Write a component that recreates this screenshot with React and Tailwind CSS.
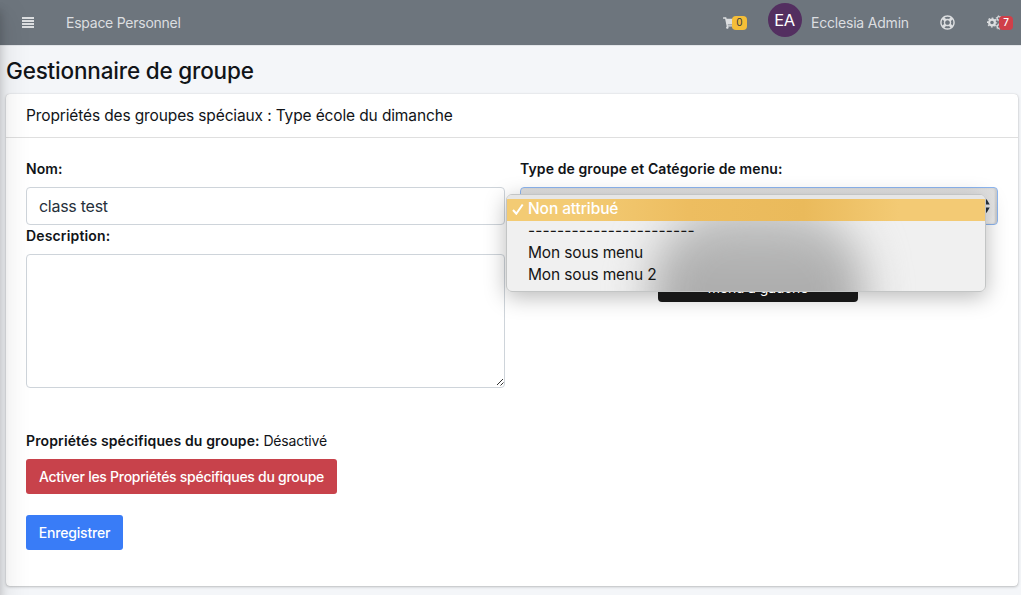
import { FaShoppingCart, FaRegLifeRing } from 'react-icons/fa';

function Cogs() {
  return (
    <svg viewBox="0 0 16 15" className="h-[15px] w-[16px] shrink-0" fill="none" stroke="currentColor">
      <circle cx="5" cy="7.5" r="2.9" strokeWidth="2.2" />
      <circle cx="5" cy="7.5" r="4.4" strokeWidth="1.4" strokeDasharray="1.7 1.755" strokeDashoffset="0.85" />
      <circle cx="11.8" cy="3.4" r="1.7" strokeWidth="1.3" />
      <circle cx="11.8" cy="3.4" r="2.6" strokeWidth="0.9" strokeDasharray="1.3 1.42" />
      <circle cx="11.8" cy="11.6" r="1.7" strokeWidth="1.3" />
      <circle cx="11.8" cy="11.6" r="2.6" strokeWidth="0.9" strokeDasharray="1.3 1.42" />
    </svg>
  );
}

function Header() {
  return (
    <header className="flex h-[46px] items-center border-b border-[#e3e6ea] bg-[#6d757d] text-[14px] text-[#dcdee0]">
      <svg viewBox="0 0 12 12" className="ml-[22px] h-3 w-3 shrink-0" fill="currentColor">
        <path d="M0 0h12v2H0zM0 3h12v2H0zM0 6h12v2H0zM0 9h12v2H0z" />
      </svg>
      <span className="ml-[32px] w-[115px] whitespace-nowrap tracking-[-0.25px]">Espace Personnel</span>
      <div className="ml-auto flex h-full items-center">
        <div className="flex w-[25px] items-center">
          <FaShoppingCart className="ml-[0.5px] h-3 w-[13px] shrink-0" />
          <span className="z-10 -ml-[3.5px] flex h-[14px] w-[15px] shrink-0 items-center justify-center rounded-[4px] bg-[#f5be38] text-[10px] text-[#343a40]">0</span>
        </div>
        <div className="mb-[5px] ml-[20.5px] flex h-[34px] w-[34px] items-center justify-center rounded-full bg-[#532f60] text-[16.5px] tracking-[-0.3px] text-white">EA</div>
        <span className="ml-[9.5px] w-[98px] whitespace-nowrap tracking-[-0.2px]">Ecclesia Admin</span>
        <FaRegLifeRing className="ml-[31px] h-[15px] w-[15px]" />
        <div className="ml-[32px] mr-[7px] flex w-[27px] items-center">
          <Cogs />
          <span className="z-10 -ml-[4px] flex h-[14px] w-[14px] shrink-0 items-center justify-center rounded-[4px] bg-[#cf3f49] text-[10px] font-medium text-white">7</span>
        </div>
      </div>
    </header>
  );
}

function GroupMenu() {
  return (
    <div className="absolute -left-[15px] top-[6px] z-20 h-[98px] w-[480px] overflow-hidden rounded-[6px] border border-[#c3c5c5] bg-[#f0f0f0] pt-1 text-[15.5px] text-[#151515]">
      <div className="absolute left-[145px] top-[10px] h-[200px] w-[212px] rounded-[80px] bg-[linear-gradient(#c4c5c5,#acacac_40%)] blur-[22px]" />
      <div className="absolute left-0 top-0 h-1 w-full bg-[#e6e6e6]" />
      <div className="relative flex h-[22px] items-center bg-[linear-gradient(90deg,#f3cb74_15%,#edbd60_38%,#eaba5b_62%,#f3ca74_82%)] pl-[5px] text-white">
        <svg viewBox="0 0 12 12" className="mb-[2px] mr-[4px] h-3 w-3"><path d="M1 7l3.3 3.7L10.7 1.5" fill="none" stroke="currentColor" strokeWidth="2" /></svg>
        <span className="pb-[2px] font-medium tracking-[-0.1px]">Non attribué</span>
      </div>
      <div className="relative h-[22px] whitespace-nowrap pl-[21px] leading-[20px] tracking-[0.12px]">-----------------------</div>
      <div className="relative h-[22px] pl-[21px] leading-[20px] tracking-[-0.15px]">Mon sous menu</div>
      <div className="relative h-[22px] pl-[21px] leading-[20px] tracking-[-0.15px]">Mon sous menu 2</div>
    </div>
  );
}

export default function App() {
  return (
    <div className="relative h-[595px] w-[1021px] overflow-hidden bg-[#f4f6f9] font-['Inter',sans-serif] text-[#111418]">
      <Header />
      <h1 className="ml-[6px] mt-[10px] h-[38px] whitespace-nowrap text-[22.5px] font-medium leading-[30px] tracking-[-0.18px]">Gestionnaire de groupe</h1>
      <main className="ml-[6px] h-[492px] w-[1012px] rounded-[4px] bg-white shadow-[0_0_1px_rgba(0,0,0,.2),0_1px_3px_rgba(0,0,0,.22)]">
        <h2 className="h-[44px] border-b border-[#dfdfdf] pl-5 text-[15.5px] leading-[43px] tracking-[-0.13px]">Propriétés des groupes spéciaux : Type école du dimanche</h2>
        <div className="px-5 pt-[21px] text-[14px]">
          <div className="flex gap-[15px]">
            <section className="w-[479px]">
              <label className="block h-[28px] font-semibold leading-[19px] tracking-[0.1px]">Nom:</label>
              <div className="h-[38px] rounded-[4px] border border-[#ced4da] pl-3 text-[16px] leading-[37px] tracking-[-0.27px] text-[#26303b]">class test</div>
              <label className="block h-[29px] pt-px font-semibold leading-[19px] tracking-[0.15px]">Description:</label>
              <div className="flex h-[134px] items-end justify-end rounded-[4px] border border-[#ced4da]">
                <svg viewBox="0 0 8 8" className="mb-px h-2 w-2"><path d="M1 7l6-6M4.5 7.5l3-3" fill="none" stroke="#333" /></svg>
              </div>
            </section>
            <section className="w-[478px]">
              <label className="block h-[28px] font-semibold leading-[19px] tracking-[0.1px]">Type de groupe et Catégorie de menu:</label>
              <div className="relative flex h-[38px] items-center justify-end rounded-[4px] border border-[#8cb5ef] bg-[linear-gradient(#dfdfdf,#f2f2f2)] pr-[7px] shadow-[inset_-2px_0_2px_#cacaca]">
                <svg viewBox="0 0 6 13" className="h-[14px] w-[7px]"><path d="M0 5L3 0l3 5zM0 8l3 5 3-5z" fill="#26303b" /></svg>
                <div className="absolute left-[137px] top-[75px] z-10 h-[39px] w-[200px] rounded-[4px] bg-[#171717] pt-[13px] text-center text-[14px] leading-[24px] tracking-[-0.1px] text-white">menu à gauche</div>
                <div className="absolute -left-[15px] top-[6px] h-[98px] w-[480px] rounded-[6px] shadow-[0_5px_22px_rgba(0,0,0,.28)]" />
                <GroupMenu />
              </div>
            </section>
          </div>
          <p className="mt-[43px] h-[28px] leading-[19px] tracking-[-0.2px]"><b className="font-semibold tracking-[0.13px]">Propriétés spécifiques du groupe:</b>{' '}<span>Désactivé</span></p>
          <button className="block h-[35px] w-[311px] whitespace-nowrap rounded-[3px] bg-[#c8424b] text-[14px] font-medium tracking-[-0.27px] text-white">Activer les Propriétés spécifiques du groupe</button>
          <button className="mt-[21px] block h-[35px] w-[97px] rounded-[3px] bg-[#397cf7] text-[14px] font-medium tracking-[-0.2px] text-white">Enregistrer</button>
        </div>
      </main>
      <div className="absolute -left-2 top-0 h-full w-2 shadow-[0_14px_28px_rgba(0,0,0,.25),0_10px_10px_rgba(0,0,0,.22)]" />
    </div>
  );
}
